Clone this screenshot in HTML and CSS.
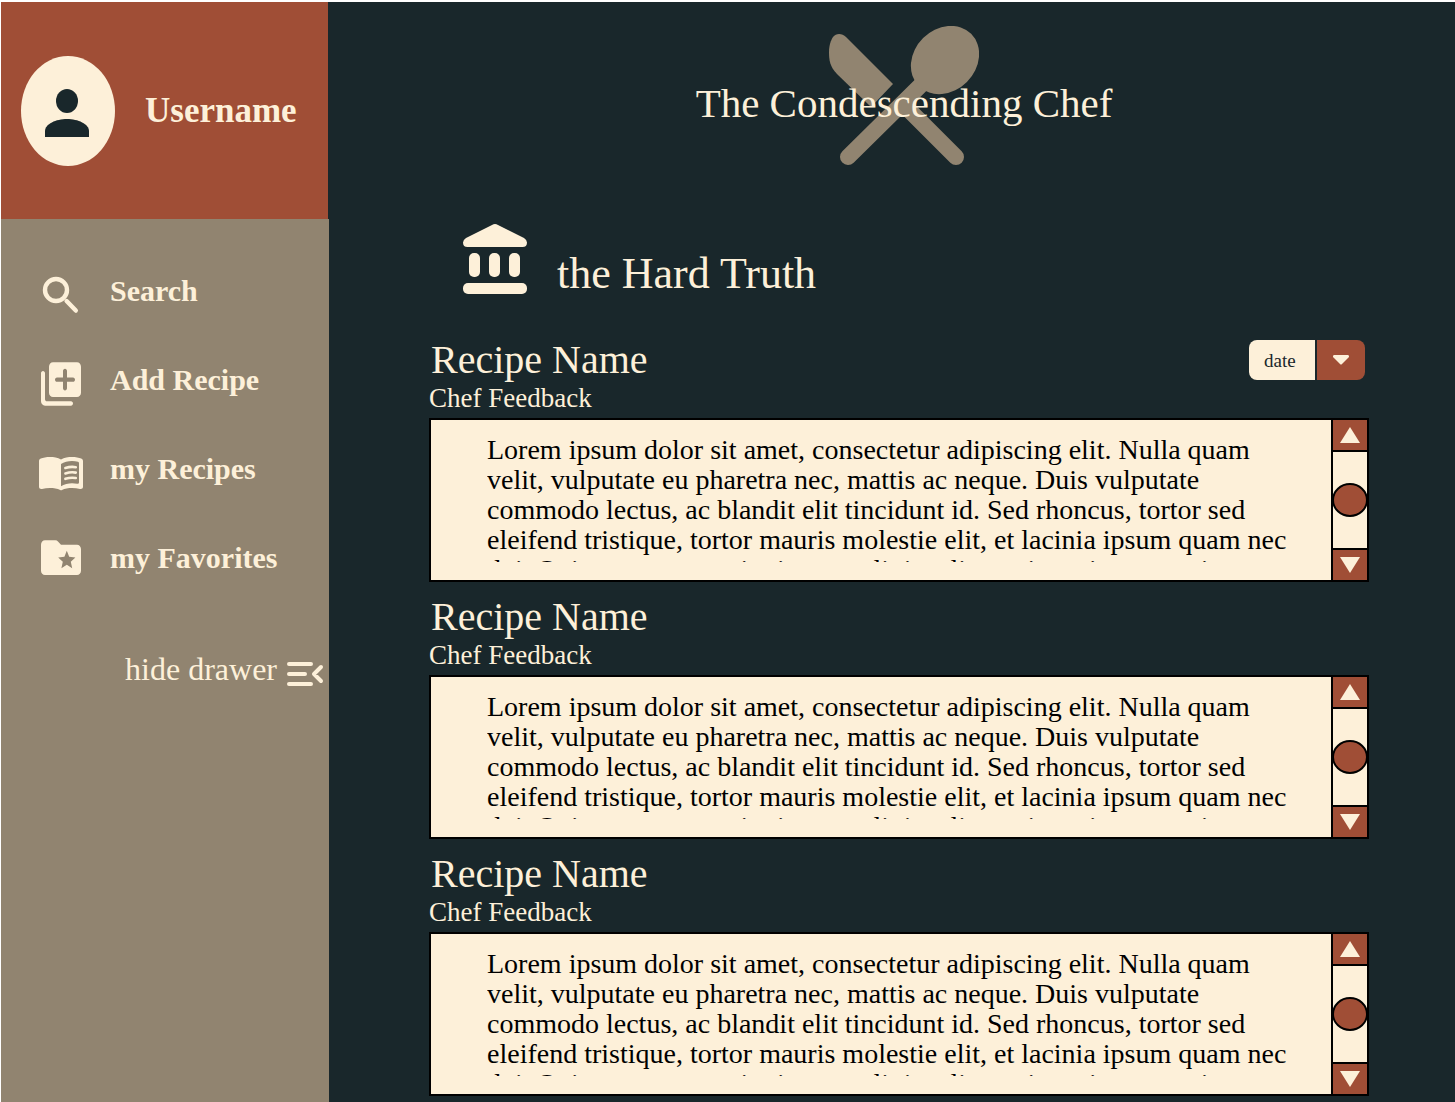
FILE: index.html
```html
<!DOCTYPE html>
<html lang="en">
<head>
<meta charset="utf-8">
<meta name="viewport" content="width=device-width, initial-scale=1">
<title>The Condescending Chef</title>
<link rel="stylesheet" href="styles.css">
</head>
<body>
<div class="app">
  <aside class="drawer">
    <div class="profile">
      <svg class="avatar" viewBox="0 0 94 110" aria-hidden="true">
        <ellipse class="avatar-disc" cx="47" cy="55" rx="47" ry="55"/>
        <ellipse cx="46" cy="45" rx="11" ry="12"/>
        <path d="M24 81v-6c0-7 11-12 22-12s22 5 22 12v6z"/>
      </svg>
      <span class="username">Username</span>
    </div>
    <nav>
      <ul class="menu">
        <li><a class="menu-link" href="#search">
          <svg class="icon" viewBox="0 0 24 24" aria-hidden="true"><g fill="none" stroke="currentColor" stroke-width="2.200" stroke-linecap="round"><circle cx="9.5" cy="9.500" r="5.500"/><path d="M14.800 15l4.600 4.800"/></g></svg>
          <span class="menu-text">Search</span></a></li>
        <li><a class="menu-link" href="#add">
          <svg class="icon icon-tall" viewBox="0 0 24 24" preserveAspectRatio="none" aria-hidden="true"><path d="M3 6c-.55 0-1 .45-1 1v13c0 1.1.9 2 2 2h13c.55 0 1-.45 1-1s-.45-1-1-1H5c-.55 0-1-.45-1-1V7c0-.55-.45-1-1-1zm17-4H8c-1.100 0-2 .9-2 2v12c0 1.100.9 2 2 2h12c1.100 0 2-.9 2-2V4c0-1.100-.9-2-2-2zm-2 9h-3v3c0 .55-.45 1-1 1s-1-.45-1-1v-3h-3c-.55 0-1-.45-1-1s.45-1 1-1h3V6c0-.55.45-1 1-1s1 .45 1 1v3h3c.55 0 1 .45 1 1s-.45 1-1 1z"/></svg>
          <span class="menu-text">Add Recipe</span></a></li>
        <li><a class="menu-link" href="#recipes">
          <svg class="icon" viewBox="0 0 24 24" aria-hidden="true"><path d="M12 5.200C10.400 4.200 8.300 4 6.500 4 4.700 4 3 4.300 1.900 4.800 1.300 5.100 1 5.500 1 6.100v12.800c0 .8.700 1.300 1.500 1.100C3.700 19.700 5.100 19.500 6.500 19.500c1.800 0 3.700.2 5.100 1 .3.200.6.200.9 0 1.400-.8 3.200-1 5-1 1.400 0 2.800.2 4 .5.800.2 1.500-.3 1.500-1.100V6.100c0-.6-.3-1-.9-1.300C21 4.300 19.300 4 17.500 4c-1.800 0-3.900.2-5.500 1.200z"/><path class="cut" d="M12 7.500c1.400-.9 3.600-1.500 5.500-1.500 1.100 0 2.100.1 3 .4.300.1.500.3.500.6v9.600c0 .5-.4.900-.9.800-.8-.2-1.700-.3-2.600-.3-1.700 0-4.100.6-5.500 1.500z"/><g fill="none" stroke="currentColor" stroke-width="1.300" stroke-linecap="round"><path d="M14.200 9.500c1.600-.5 3.400-.7 5.200-.4M14.200 12.200c1.600-.5 3.400-.7 5.200-.4M14.200 14.900c1.600-.5 3.400-.7 5.200-.4"/></g></svg>
          <span class="menu-text">my Recipes</span></a></li>
        <li><a class="menu-link" href="#favorites">
          <svg class="icon icon-tall" viewBox="0 2 24 24" preserveAspectRatio="none" aria-hidden="true"><path d="M20 6h-8l-1.400-1.400C10.200 4.200 9.700 4 9.200 4H4c-1.100 0-2 .9-2 2v12c0 1.100.9 2 2 2h16c1.100 0 2-.9 2-2V8c0-1.100-.9-2-2-2z"/><path class="cut" d="M14.900 8.800l1.200 2.800 3.100.3-2.300 2 .7 3-2.700-1.600-2.700 1.600.7-3-2.300-2 3.100-.3z"/></svg>
          <span class="menu-text">my Favorites</span></a></li>
      </ul>
    </nav>
    <button class="hide-drawer" type="button">
      <span class="hide-text">hide drawer</span>
      <svg class="icon" viewBox="0 0 24 24" aria-hidden="true"><g fill="none" stroke="currentColor" stroke-width="2" stroke-linecap="round" stroke-linejoin="round"><path d="M4 7h11M4 12h8M4 17h11M20 8.500L16.500 12l3.500 3.500"/></g></svg>
    </button>
  </aside>

  <main class="content">
    <header class="brand">
      <svg class="brand-mark" viewBox="0 0 150 140" aria-hidden="true">
        <path d="M17 11L64 58 42 81 8 48C1 41 0 34 0 26 0 19 2 14 4 11 7 7 13 7 17 11z"/>
        <path class="handle" d="M19 131L95 56M78 82L127 131"/>
        <ellipse cx="116" cy="34" rx="37" ry="31" transform="rotate(-45 116 34)"/>
      </svg>
      <h1 class="brand-name">The Condescending Chef</h1>
    </header>

    <div class="page-title">
      <svg class="page-icon" viewBox="0 0 64 70" aria-hidden="true">
        <path d="M29 1Q32-1 35 1L61 14Q64 16 64 18.500 64 23 59.500 23H4.500Q0 23 0 18.500 0 16 3 14z"/>
        <rect x="6" y="29" width="11" height="24" rx="5"/>
        <rect x="26" y="29" width="11" height="24" rx="5"/>
        <rect x="46" y="29" width="11" height="24" rx="5"/>
        <rect x="0" y="59" width="64" height="11" rx="5"/>
      </svg>
      <h2 class="page-name">the Hard Truth</h2>
    </div>

    <section class="review">
      <div class="review-head">
        <h3 class="review-name">Recipe Name</h3>
        <div class="sort">
          <select class="sort-select" aria-label="Sort by"><option>date</option></select>
          <svg class="sort-arrow" viewBox="0 0 16 10" aria-hidden="true"><path d="M1 0h14q2 1 .5 2.500L9 9q-1 1-2 0L.5 2.500Q-1 1 1 0z"/></svg>
        </div>
      </div>
      <p class="review-label">Chef Feedback</p>
      <div class="feedback">
        <div class="feedback-body"><p class="feedback-text">Lorem ipsum dolor sit amet, consectetur adipiscing elit. Nulla quam<br>velit, vulputate eu pharetra nec, mattis ac neque. Duis vulputate<br>commodo lectus, ac blandit elit tincidunt id. Sed rhoncus, tortor sed<br>eleifend tristique, tortor mauris molestie elit, et lacinia ipsum quam nec<br>dui. Quisque nec mauris sit amet elit iaculis pretium sit amet quis</p></div>
        <div class="scroller">
          <button class="step" type="button" aria-label="Scroll up"><svg viewBox="0 0 20 16"><path d="M10 0l10 16H0z"/></svg></button>
          <div class="track"><div class="thumb"></div></div>
          <button class="step" type="button" aria-label="Scroll down"><svg viewBox="0 0 20 16"><path d="M0 0h20L10 16z"/></svg></button>
        </div>
      </div>
    </section>

    <section class="review">
      <div class="review-head"><h3 class="review-name">Recipe Name</h3></div>
      <p class="review-label">Chef Feedback</p>
      <div class="feedback">
        <div class="feedback-body"><p class="feedback-text">Lorem ipsum dolor sit amet, consectetur adipiscing elit. Nulla quam<br>velit, vulputate eu pharetra nec, mattis ac neque. Duis vulputate<br>commodo lectus, ac blandit elit tincidunt id. Sed rhoncus, tortor sed<br>eleifend tristique, tortor mauris molestie elit, et lacinia ipsum quam nec<br>dui. Quisque nec mauris sit amet elit iaculis pretium sit amet quis</p></div>
        <div class="scroller">
          <button class="step" type="button" aria-label="Scroll up"><svg viewBox="0 0 20 16"><path d="M10 0l10 16H0z"/></svg></button>
          <div class="track"><div class="thumb"></div></div>
          <button class="step" type="button" aria-label="Scroll down"><svg viewBox="0 0 20 16"><path d="M0 0h20L10 16z"/></svg></button>
        </div>
      </div>
    </section>

    <section class="review">
      <div class="review-head"><h3 class="review-name">Recipe Name</h3></div>
      <p class="review-label">Chef Feedback</p>
      <div class="feedback">
        <div class="feedback-body"><p class="feedback-text">Lorem ipsum dolor sit amet, consectetur adipiscing elit. Nulla quam<br>velit, vulputate eu pharetra nec, mattis ac neque. Duis vulputate<br>commodo lectus, ac blandit elit tincidunt id. Sed rhoncus, tortor sed<br>eleifend tristique, tortor mauris molestie elit, et lacinia ipsum quam nec<br>dui. Quisque nec mauris sit amet elit iaculis pretium sit amet quis</p></div>
        <div class="scroller">
          <button class="step" type="button" aria-label="Scroll up"><svg viewBox="0 0 20 16"><path d="M10 0l10 16H0z"/></svg></button>
          <div class="track"><div class="thumb"></div></div>
          <button class="step" type="button" aria-label="Scroll down"><svg viewBox="0 0 20 16"><path d="M0 0h20L10 16z"/></svg></button>
        </div>
      </div>
    </section>
  </main>
</div>
</body>
</html>
```
FILE: styles.css
```css
:root {
  --night: #19272b;
  --rust: #a04e36;
  --taupe: #918470;
  --cream: #fdf0d9;
}

* { box-sizing: border-box; }

body {
  margin: 0;
  padding: 2px 0 0 1px;
  background: #fff;
  color: var(--cream);
  font-family: "Liberation Serif", "Times New Roman", serif;
}

h1, h2, h3, p, ul { margin: 0; padding: 0; font-weight: 400; }

svg { display: block; flex: none; fill: currentColor; }

button, select { font: inherit; color: inherit; border: 0; }

.app {
  display: grid;
  grid-template-columns: 328px minmax(0, 1fr);
  min-height: calc(100vh - 2px);
  background: var(--night);
}

/* Drawer */
.drawer {
  display: flex;
  flex-direction: column;
  background: var(--taupe);
}

.profile {
  display: flex;
  align-items: center;
  gap: 30px;
  height: 217px;
  padding-left: 20px;
  border-right: 1px solid var(--night);
  background: var(--rust);
}

.avatar { width: 94px; height: 110px; fill: var(--night); }
.avatar-disc { fill: var(--cream); }
.username { font-size: 35px; font-weight: 700; }

.menu {
  display: flex;
  flex-direction: column;
  gap: 37px;
  padding: 50px 0 0 36px;
  list-style: none;
}

.menu-link {
  display: flex;
  align-items: center;
  gap: 25px;
  height: 52px;
  color: inherit;
  font-size: 30px;
  font-weight: 700;
  text-decoration: none;
}

.menu-text { padding-bottom: 8px; }
.icon { width: 48px; height: 48px; }
.icon-tall { height: 52px; }
.cut { fill: var(--taupe); }

.hide-drawer {
  display: flex;
  align-items: center;
  align-self: flex-end;
  gap: 4px;
  margin-top: 62px;
  padding: 0;
  background: none;
  font-size: 32px;
}

.hide-text { padding-bottom: 10px; }

/* Content */
.content { padding: 24px 86px 6px 100px; }

.brand {
  display: grid;
  place-items: center;
  padding-left: 10px;
}

.brand-mark, .brand-name { grid-area: 1 / 1; }
.brand-mark { width: 150px; height: 140px; color: var(--taupe); }
.handle { fill: none; stroke: currentColor; stroke-width: 16px; stroke-linecap: round; }
.brand-name { padding-top: 14px; font-size: 41px; }

.page-title {
  display: flex;
  align-items: flex-end;
  gap: 30px;
  margin: 58px 0 46px;
  padding-left: 34px;
}

.page-icon { width: 64px; height: 70px; }
.page-name { font-size: 44px; line-height: 40px; }

.review + .review { margin-top: 15px; }

.review-head {
  display: flex;
  justify-content: space-between;
  padding: 0 4px 0 2px;
}

.review-name { font-size: 40px; line-height: 40px; }
.review-label { margin: 2px 0 4px; font-size: 27px; line-height: 32px; }

.sort { display: grid; align-items: center; }
.sort-select, .sort-arrow { grid-area: 1 / 1; }

.sort-select {
  appearance: none;
  width: 116px;
  height: 40px;
  padding: 0 50px 0 15px;
  border-radius: 8px;
  background: linear-gradient(90deg, var(--cream) 66px, var(--night) 66px 68px, var(--rust) 68px);
  color: var(--night);
  font-size: 19px;
}

.sort-arrow {
  justify-self: end;
  width: 16px;
  height: 10px;
  margin-right: 16px;
  pointer-events: none;
}

.feedback {
  display: flex;
  border: 2px solid #000;
  background: var(--cream);
  color: #000;
}

.feedback-body { flex: 1; padding: 15px 40px 18px 56px; }

.feedback-text {
  height: 127px;
  overflow: hidden;
  font-size: 28px;
  line-height: 30px;
  white-space: nowrap;
}

.scroller {
  display: flex;
  flex-direction: column;
  width: 36px;
  border-left: 2px solid #000;
}

.step {
  display: grid;
  place-items: center;
  height: 30px;
  padding: 0;
  background: var(--rust);
  color: var(--cream);
}

.step svg { width: 20px; height: 16px; }

.track {
  display: flex;
  flex: 1;
  align-items: center;
  justify-content: center;
  border: solid #000;
  border-width: 2px 0;
}

.thumb {
  flex: none;
  width: 36px;
  height: 34px;
  border: 2px solid #000;
  border-radius: 50%;
  background: var(--rust);
}
```
